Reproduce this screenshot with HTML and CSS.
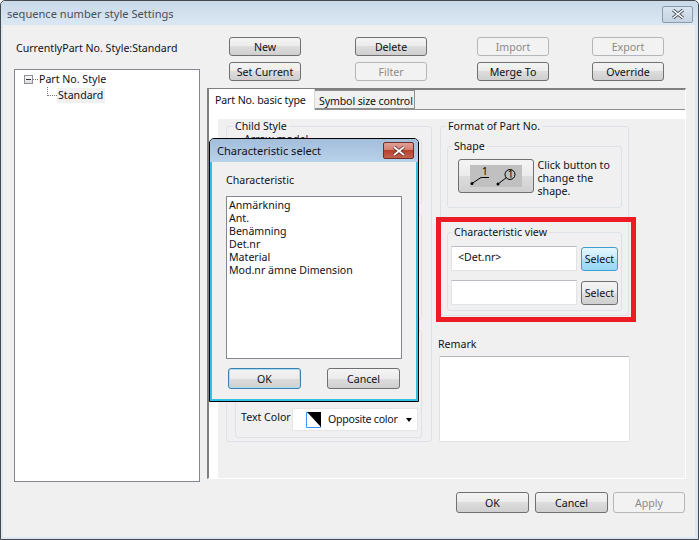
FILE: index.html
```html
<!DOCTYPE html>
<html lang="en">
<head>
    <meta charset="UTF-8">
    <title>sequence number style Settings</title>
    <link rel="stylesheet" href="styles.css">
</head>
<body>

    <div class="window">
        <div class="titlebar">
            <span class="title">sequence number style Settings</span>
            <span class="close-btn">
                <svg width="14" height="10" viewBox="0 0 14 10"><path d="M2 1l10 8M12 1L2 9" stroke="#4a5563" stroke-width="3.4"/><path d="M2 1l10 8M12 1L2 9" stroke="#fff" stroke-width="1.6"/></svg>
            </span>
        </div>

        <div class="client">
            <div class="main">
                <!-- Left side: current style and tree -->
                <div class="side">
                    <div class="current">CurrentlyPart No. Style:Standard</div>
                    <div class="tree">
                        <div class="tree-row">
                            <span class="expander"></span>
                            <span class="dots"></span>
                            <span>Part No. Style</span>
                        </div>
                        <div class="tree-row tree-child">
                            <span class="elbow"></span>
                            <span class="tree-selected">Standard</span>
                        </div>
                    </div>
                </div>

                <!-- Right side: toolbar and tabs -->
                <div class="content">
                    <div class="toolbar">
                        <button class="btn">New</button>
                        <button class="btn">Delete</button>
                        <button class="btn" disabled>Import</button>
                        <button class="btn" disabled>Export</button>
                        <button class="btn">Set Current</button>
                        <button class="btn" disabled>Filter</button>
                        <button class="btn">Merge To</button>
                        <button class="btn">Override</button>
                    </div>

                    <div class="tabs">
                        <div class="tab-strip">
                            <span class="tab tab-active">Part No. basic type</span>
                            <span class="tab">Symbol size control</span>
                        </div>
                        <div class="page">
                            <div class="page-inner">
                                <fieldset class="group child-style">
                                    <legend>Child Style</legend>
                                    <fieldset class="group sub-first">
                                        <legend>Arrow model</legend>
                                    </fieldset>
                                    <fieldset class="group sub-second"></fieldset>
                                    <fieldset class="group sub-third">
                                        <div class="color-row">
                                            <span>Text Color</span>
                                            <div class="combo">
                                                <svg width="15" height="16" viewBox="0 0 15 16"><path d="M.5.5h14v15H.5z" fill="#fff" stroke="#3d94f6"/><path d="M1 0h14v15z" fill="#000"/></svg>
                                                <span class="combo-text">Opposite color</span>
                                                <span class="combo-arrow"></span>
                                            </div>
                                        </div>
                                    </fieldset>
                                </fieldset>

                                <div class="right-col">
                                    <fieldset class="group format">
                                        <legend>Format of Part No.</legend>
                                        <fieldset class="group shape">
                                            <legend>Shape</legend>
                                            <div class="shape-row">
                                                <button class="btn shape-btn">
                                                    <svg width="52" height="22" viewBox="0 0 52 22">
                                                        <rect width="52" height="22" fill="#c0c0c0"/>
                                                        <path d="M2 18.5l9-6h8M28 19l8.500-6.500" fill="none" stroke="#000"/>
                                                        <circle cx="2" cy="18.500" r="1.500"/>
                                                        <circle cx="28" cy="19" r="1.500"/>
                                                        <circle cx="40" cy="9.500" r="5" fill="none" stroke="#000"/>
                                                        <text x="12" y="10" class="shape-num">1</text>
                                                        <text x="37.800" y="13" class="shape-num">1</text>
                                                    </svg>
                                                </button>
                                                <span class="shape-hint">Click button to change the shape.</span>
                                            </div>
                                        </fieldset>
                                        <fieldset class="group char-view">
                                            <legend>Characteristic view</legend>
                                            <div class="char-row">
                                                <div class="field">&lt;Det.nr&gt;</div>
                                                <button class="btn select-btn btn-hot">Select</button>
                                            </div>
                                            <div class="char-row">
                                                <div class="field"></div>
                                                <button class="btn select-btn">Select</button>
                                            </div>
                                        </fieldset>
                                    </fieldset>
                                    <div class="remark-label">Remark</div>
                                    <div class="remark"></div>
                                    <!-- Red annotation round the characteristic view -->
                                    <div class="highlight"></div>
                                </div>
                            </div>
                        </div>
                    </div>
                </div>
            </div>

            <div class="footer">
                <button class="btn footer-btn footer-ok">OK</button>
                <button class="btn footer-btn">Cancel</button>
                <button class="btn footer-btn footer-apply" disabled>Apply</button>
            </div>
        </div>

        <!-- Modal dialog on top of the settings window -->
        <div class="dialog">
            <div class="dialog-title">
                <span>Characteristic select</span>
                <span class="dialog-close">
                    <svg width="14" height="10" viewBox="0 0 14 10"><path d="M2 1l10 8M12 1L2 9" stroke="#5a2a22" stroke-width="3.4"/><path d="M2 1l10 8M12 1L2 9" stroke="#fff" stroke-width="1.8"/></svg>
                </span>
            </div>
            <div class="dialog-body">
                <div class="dialog-label">Characteristic</div>
                <div class="listbox">
                    <div>Anmärkning</div>
                    <div>Ant.</div>
                    <div>Benämning</div>
                    <div>Det.nr</div>
                    <div>Material</div>
                    <div>Mod.nr ämne Dimension</div>
                </div>
                <div class="dialog-buttons">
                    <button class="btn dialog-btn btn-default">OK</button>
                    <button class="btn dialog-btn">Cancel</button>
                </div>
            </div>
        </div>
    </div>

</body>
</html>
```

FILE: styles.css
```css
/* Basic reset */
* {
    margin: 0;
    padding: 0;
    box-sizing: border-box;
}

body {
    font-family: 'Noto Sans', sans-serif;
    font-size: 10.6px;
    line-height: 13px;
    color: #10101a;
    overflow: hidden;
}

/* Outer window frame */
.window {
    position: relative;
    width: 699px;
    height: 540px;
    display: flex;
    flex-direction: column;
    padding: 0 3px 2px 2px;
    background: #dbe7f3;
    border: 1px solid #45494e;
    border-radius: 5px 5px 0 0;
}

.titlebar {
    height: 24px;
    margin: 0 -3px 0 -2px;
    padding: 2px 5px 0 6px;
    display: flex;
    justify-content: space-between;
    align-items: center;
    background: linear-gradient(#c9d9e9, #dbe7f3);
    border-radius: 5px 5px 0 0;
}

.title {
    margin-bottom: 2px;
    color: #4a4f55;
    font-size: 11.1px;
}

.close-btn {
    width: 31px;
    height: 17px;
    display: flex;
    align-items: center;
    justify-content: center;
    border: 1px solid #8a9aab;
    border-radius: 2px;
    background: linear-gradient(#d9e4ef, #c5d3e2);
}

.client {
    flex: 1;
    display: flex;
    flex-direction: column;
    background: #f0f0f0;
}

.main {
    display: flex;
    padding-left: 11px;
}

/* Left side */
.side {
    width: 186px;
    margin-top: 17px;
}

.current {
    margin-left: 2px;
    margin-bottom: 14px;
}

.tree {
    height: 413px;
    padding: 1px 0 0 9px;
    background: #fff;
    border: 1px solid #828790;
}

.tree-row {
    height: 16px;
    display: flex;
    align-items: center;
}

.tree-child {
    padding-left: 23px;
}

.expander {
    position: relative;
    width: 9px;
    height: 9px;
    border: 1px solid #8c8f94;
    background: linear-gradient(to bottom, #fff, #dcdcdc);
}

.expander::after {
    content: "";
    position: absolute;
    left: 1px;
    top: 3px;
    width: 5px;
    height: 1px;
    background: #333;
}

.dots {
    width: 5px;
    margin: 0 1px 0 0;
    border-top: 1px dotted #777;
}

.elbow {
    width: 10px;
    height: 9px;
    margin-top: -8px;
    border-left: 1px dotted #777;
    border-bottom: 1px dotted #777;
}

.tree-selected {
    width: 48px;
    padding: 1px 1px;
    background: #f0f0f0;
}

/* Right side */
.content {
    width: 479px;
    margin-left: 7px;
}

.toolbar {
    display: grid;
    grid-template-columns: 126px 122px 115px 72px;
    row-gap: 6px;
    padding: 12px 0 0 22px;
    margin-bottom: 7px;
}

.btn {
    width: 72px;
    height: 19px;
    padding-top: 1px;
    font: inherit;
    color: #10101a;
    border: 1px solid #707070;
    border-radius: 3px;
    background: linear-gradient(#f4f4f4 0%, #ebebeb 50%, #dddddd 50%, #cfcfcf 100%);
}

.btn:disabled {
    color: #8a8a8a;
    border-color: #b4b7b9;
    background: #f2f2f2;
}

.btn-hot {
    border-color: #3c9fd1;
    background: linear-gradient(#e4f6fe 0%, #c6eafd 50%, #ade0f8 50%, #9ad8f5 100%);
}

.btn-default {
    border-color: #3c7fb1;
    box-shadow: inset 0 0 0 1px #a9dcf5;
}

.tabs {
    height: 391px;
    display: flex;
    flex-direction: column;
    border-top: 2px solid #808080;
    border-left: 2px solid #808080;
    border-right: 1px solid #fff;
    border-bottom: 1px solid #fff;
}

.tab-strip {
    height: 20px;
    display: flex;
    align-items: flex-end;
    border-bottom: 1px solid #8e8f8f;
}

.tab {
    height: 19px;
    width: 100px;
    line-height: 20px;
    padding-left: 4px;
    white-space: nowrap;
    letter-spacing: -0.13px;
    border: 1px solid #8e8f8f;
    border-left: 0;
    background: #f0f0f0;
}

.tab-active {
    width: 106px;
    height: 21px;
    margin-bottom: -1px;
    padding-left: 6px;
    line-height: 22px;
    background: #fff;
    border: 1px solid #d9d9d9;
    border-width: 0 1px 0 0;
}

.page {
    flex: 1;
    padding: 9px 0 0 9px;
    background: #fff;
}

.page-inner {
    height: 100%;
    display: flex;
    padding-left: 8px;
    background: #f0f0f0;
}

/* Group boxes */
.group {
    border: 1px solid #dce2e8;
    border-radius: 3px;
    min-width: 0;
}

.group legend {
    margin-left: 6px;
    padding: 0 2px;
    line-height: 14px;
}

.child-style {
    width: 206px;
    height: 323px;
    margin-right: 8px;
    display: flex;
    flex-direction: column;
    padding: 0 9px 3px 8px;
}

.child-style > legend {
    margin-left: -2px;
}

.sub-first {
    height: 72px;
    margin-top: -1px;
}

.sub-second {
    height: 107px;
    margin-top: 10px;
}

.sub-third {
    height: 108px;
    margin-top: 10px;
    display: flex;
    flex-direction: column;
    justify-content: flex-end;
    padding: 0 3px 6px 5px;
}

.color-row {
    display: flex;
    justify-content: space-between;
    white-space: nowrap;
}

.color-row > span {
    padding-top: 3px;
}

.combo {
    width: 126px;
    height: 23px;
    display: flex;
    align-items: center;
    padding: 0 5px 0 13px;
    background: #fff;
    border: 1px solid #e6e6e6;
}

.combo-text {
    flex: 1;
    margin-left: 7px;
    letter-spacing: -0.25px;
}

.combo-arrow {
    width: 0;
    height: 0;
    border-left: 3.5px solid transparent;
    border-right: 3.5px solid transparent;
    border-top: 4px solid #000;
}

.right-col {
    position: relative;
    width: 191px;
}

.format {
    width: 189px;
    height: 197px;
    padding: 0 6px;
}

.format > legend {
    margin-left: -1px;
}

.shape {
    height: 69px;
    margin-top: 6px;
}

.shape legend {
    margin-left: 4px;
}

.shape-row {
    display: flex;
    padding: 6px 0 0 10px;
}

.shape-btn {
    width: 76px;
    height: 34px;
    padding: 0;
    display: flex;
    align-items: center;
    justify-content: center;
}

.shape-num {
    font-size: 10px;
}

.shape-hint {
    width: 84px;
    margin-left: 4px;
}

.char-view {
    height: 86px;
    margin-top: 17px;
    padding: 6px 3px 0;
}

.char-view legend {
    margin-left: 1px;
}

.char-row {
    display: flex;
    justify-content: space-between;
    align-items: flex-end;
    height: 26px;
    margin-bottom: 8px;
}

.field {
    width: 126px;
    height: 25px;
    padding: 4px 6px;
    background: #fff;
    border: 1px solid #e2e3e6;
    border-top-color: #b9bcc2;
}

.select-btn {
    width: 37px;
    height: 24px;
}

.remark-label {
    margin-top: 22px;
    margin-left: -2px;
}

.remark {
    width: 191px;
    height: 86px;
    margin-top: 5px;
    margin-left: -1px;
    background: #fff;
    border: 1px solid #dfe1e5;
    border-top-color: #b4b6bd;
    border-radius: 2px;
}

.highlight {
    position: absolute;
    left: -4px;
    top: 98px;
    width: 200px;
    height: 105px;
    border: 5px solid #ed1c24;
}

/* Footer buttons */
.footer {
    display: flex;
    justify-content: flex-end;
    gap: 5px;
    padding: 10px 10px 0 0;
}

.footer-btn {
    width: 73px;
    height: 21px;
}

.footer-ok {
    margin-right: 1px;
}

.footer-apply {
    width: 72px;
}

/* Dialog */
.dialog {
    position: absolute;
    left: 208px;
    top: 137px;
    width: 210px;
    height: 264px;
    display: flex;
    flex-direction: column;
    border: 1px solid #000;
    border-radius: 5px 5px 0 0;
    background: #f0f0f0;
}

.dialog-title {
    height: 23px;
    padding: 3px 4px 0 7px;
    display: flex;
    justify-content: space-between;
    align-items: flex-start;
    font-size: 11.1px;
    line-height: 18px;
    background: linear-gradient(#a2bedb, #b9d1ea);
    border-radius: 4px 4px 0 0;
}

.dialog-close {
    width: 31px;
    height: 17px;
    display: flex;
    align-items: center;
    justify-content: center;
    border: 1px solid #6e2f28;
    border-radius: 2px;
    background: linear-gradient(#e0a196 0%, #d27c6c 50%, #b7402c 50%, #c4624f 100%);
}

.dialog-body {
    flex: 1;
    padding: 0 15px 0 14px;
    border: 2px solid #33bfe5;
    border-top: 0;
}

.dialog-label {
    margin-top: 12px;
    margin-bottom: 9px;
}

.listbox {
    width: 176px;
    height: 163px;
    padding: 2px 2px;
    background: #fff;
    border: 1px solid #828790;
}

.dialog-buttons {
    display: flex;
    justify-content: space-between;
    padding: 9px 1px 0 2px;
}

.dialog-btn {
    width: 73px;
    height: 21px;
}
```
